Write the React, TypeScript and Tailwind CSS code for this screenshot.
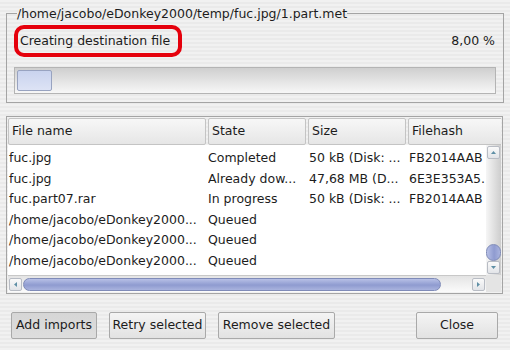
import React from "react";

const rows = [
  ["fuc.jpg", "Completed", "50 kB (Disk: ...", "FB2014AAB"],
  ["fuc.jpg", "Already dow...", "47,68 MB (D...", "6E3E353A5."],
  ["fuc.part07.rar", "In progress", "50 kB (Disk: ...", "FB2014AAB"],
  ["/home/jacobo/eDonkey2000...", "Queued", "", ""],
  ["/home/jacobo/eDonkey2000...", "Queued", "", ""],
  ["/home/jacobo/eDonkey2000...", "Queued", "", ""],
];

function Arrow({ dir }: { dir: "up" | "down" | "left" | "right" }) {
  const pts = {
    up: "2,6 4.5,3 7,6",
    down: "2,3 4.5,6 7,3",
    left: "6,2 3,4.5 6,7",
    right: "3,2 6,4.5 3,7",
  }[dir];
  return (
    <div className="w-[13px] h-[13px] border border-[#b8bcc4] rounded-[2px] bg-[linear-gradient(#fafafa,#e2e4e8)] flex items-center justify-center">
      <svg width="9" height="9" viewBox="0 0 9 9">
        <polygon points={pts} fill="#5f8fa6" />
      </svg>
    </div>
  );
}

function Btn({ label, w, pressed }: { label: string; w: string; pressed?: boolean }) {
  return (
    <div
      className={`${w} h-[27px] border border-[#a9a9a9] rounded-[2px] flex items-center justify-center whitespace-nowrap overflow-hidden text-[12.5px] text-[#1c1c1c] ${
        pressed
          ? "bg-[linear-gradient(#d6d6d6,#dedede)]"
          : "bg-[linear-gradient(#f4f4f4,#e2e2e2)]"
      }`}
    >
      {label}
    </div>
  );
}

export default function App() {
  return (
    <div
      className="w-[510px] h-[350px] overflow-hidden px-[6px] pt-[5px] text-[#1c1c1c] bg-[repeating-linear-gradient(to_bottom,#f1f1f1_0px,#f1f1f1_2px,#eaeaea_2px,#eaeaea_4px)]"
      style={{ fontFamily: '"DejaVu Sans", sans-serif' }}
    >
      <fieldset className="border border-[#a4a4a4] h-[98px] px-[7px] pb-[8px]">
        <legend className="ml-[3px] text-[12.5px] leading-[17px]">
          /home/jacobo/eDonkey2000/temp/fuc.jpg/1.part.met
        </legend>
        <div className="flex items-center justify-between mt-[3px]">
          <div className="w-[168px] h-[32px] border-[4px] border-[#e5000c] rounded-[10px] flex items-center pl-[2px] text-[12.5px]">
            Creating destination file
          </div>
          <div className="text-[12.5px] pr-[1px]">8,00 %</div>
        </div>
        <div className="mt-[10px] h-[27px] border border-[#b4b4b4] bg-[linear-gradient(#cfcfcf,#f7f7f7)] p-[2px] flex">
          <div className="w-[35px] h-full rounded-[2px] border border-[#98a3c0] bg-[linear-gradient(#c9d3ee,#dde3f5)]" />
        </div>
      </fieldset>

      <div className="mt-[13px] w-[497px] h-[178px] border border-[#a4a4a4] p-[1px] flex flex-col text-[12.5px]">
        <div className="flex gap-[2px] h-[27px] overflow-hidden">
          {[
            ["File name", "w-[198px]"],
            ["State", "w-[98px]"],
            ["Size", "w-[98px]"],
            ["Filehash", "w-[96px]"],
          ].map(([t, w]) => (
            <div
              key={t}
              className={`${w} shrink-0 h-full border border-[#c4c4c4] rounded-[2px] bg-[linear-gradient(#f7f7f7,#e6e6e6)] flex items-center pl-[3px]`}
            >
              {t}
            </div>
          ))}
        </div>
        <div className="flex flex-1 min-h-0">
          <div className="flex-1 flex flex-col min-w-0">
            <div className="flex-1 bg-white pt-[3px] overflow-hidden">
              {rows.map((r, i) => (
                <div key={i} className="flex h-[20.6px] items-center whitespace-nowrap">
                  <div className="w-[200px] shrink-0 pl-[1px] overflow-hidden">{r[0]}</div>
                  <div className="w-[101px] shrink-0 overflow-hidden">{r[1]}</div>
                  <div className="w-[100px] shrink-0 overflow-hidden">{r[2]}</div>
                  <div className="flex-1 overflow-hidden">{r[3]}</div>
                </div>
              ))}
            </div>
            <div className="h-[17px] flex items-center gap-[1px] px-[1px] bg-[linear-gradient(#e4e4e4,#fbfbfb)] border-t border-[#c8c8c8]">
              <Arrow dir="left" />
              <div className="flex-1 h-full flex items-center">
                <div className="w-[418px] h-[13px] rounded-full border border-[#7f8bb8] bg-[linear-gradient(#b7c0e6,#8f9bd0_55%,#a9b3de)]" />
              </div>
              <Arrow dir="right" />
            </div>
          </div>
          <div className="w-[15px] flex flex-col">
            <div className="flex-1 flex flex-col items-center bg-[linear-gradient(to_right,#f6f6f6,#cdcdcd)] py-[1px]">
              <Arrow dir="up" />
              <div className="flex-1" />
              <div className="w-[15px] h-[17px] rounded-full border border-[#7f8bb8] bg-[linear-gradient(to_right,#b7c0e6,#8f9bd0_55%,#a9b3de)]" />
              <Arrow dir="down" />
            </div>
            <div className="h-[17px] bg-[#e4e4e4]" />
          </div>
        </div>
      </div>

      <div className="mt-[18px] flex pl-[5px] pr-[6px]">
        <div className="flex gap-[12px]">
          <Btn label="Add imports" w="w-[86px]" pressed />
          <Btn label="Retry selected" w="w-[97px]" />
          <Btn label="Remove selected" w="w-[117px]" />
        </div>
        <div className="flex-1" />
        <Btn label="Close" w="w-[82px]" />
      </div>
    </div>
  );
}
